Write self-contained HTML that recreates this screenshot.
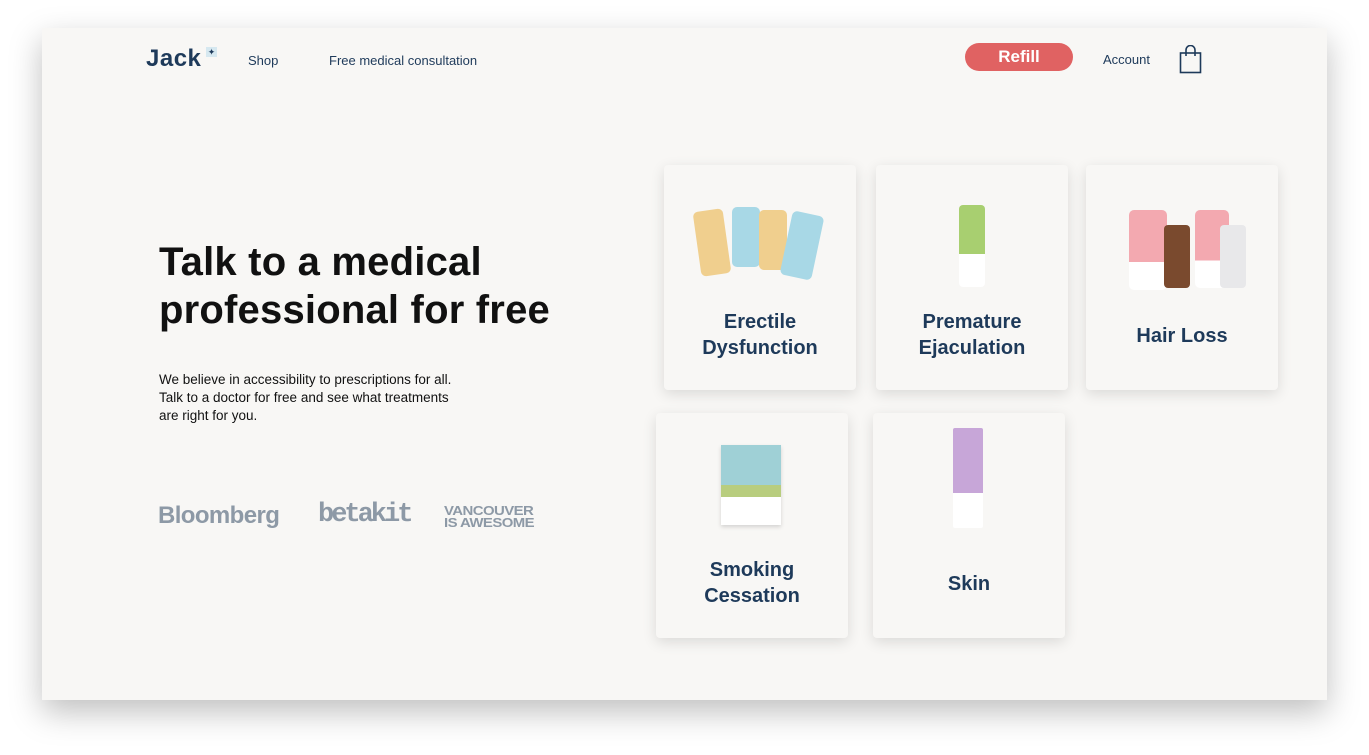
<!DOCTYPE html>
<html><head><style>
*{margin:0;padding:0;box-sizing:border-box}
body{width:1369px;height:755px;background:#fff;font-family:"Liberation Sans",sans-serif;position:relative;overflow:hidden}
.frame{position:absolute;left:42px;top:28px;width:1285px;height:672px;background:#f8f7f5;box-shadow:0 12px 30px rgba(0,0,0,.25)}
.a{position:absolute}
.nav{color:#1e3a5a;font-size:13px}
.card{position:absolute;background:#f8f7f5;border-radius:4px;box-shadow:0 4px 14px rgba(0,0,0,.12);width:192px;height:225px}
.card .t{position:absolute;left:0;right:0;text-align:center;color:#1e3a5a;font-weight:bold;font-size:20px;line-height:26px}
.logo{color:#8d99a6;font-weight:bold}
</style></head><body>
<div class="frame"></div>
<div class="a" style="left:146px;top:45px;font-size:24px;font-weight:bold;color:#1e3a5a;letter-spacing:.5px">Jack</div>
<div class="a" style="left:206px;top:47px;width:11px;height:10px;background:#d6e8f0;color:#1e3a5a;font-size:9px;text-align:center;line-height:10px">✦</div>
<div class="a nav" style="left:248px;top:53px">Shop</div>
<div class="a nav" style="left:329px;top:53px">Free medical consultation</div>
<div class="a" style="left:965px;top:43px;width:108px;height:28px;border-radius:14px;background:#e06262;color:#fff;font-weight:bold;font-size:17px;text-align:center;line-height:28px">Refill</div>
<div class="a nav" style="left:1103px;top:52px">Account</div>
<svg class="a" style="left:1179px;top:45px" width="23" height="29" viewBox="0 0 23 29"><rect x="1.5" y="8" width="20" height="19.5" fill="none" stroke="#1e3a5a" stroke-width="1.6"/><path d="M7 11V5a4.5 4.5 0 0 1 9 0v6" fill="none" stroke="#1e3a5a" stroke-width="1.6"/></svg>
<div class="a" style="left:159px;top:238px;font-size:40px;font-weight:bold;line-height:48px;color:#111;letter-spacing:.2px">Talk to a medical<br>professional for free</div>
<div class="a" style="left:159px;top:371px;font-size:13.5px;line-height:18px;color:#111">We believe in accessibility to prescriptions for all.<br>Talk to a doctor for free and see what treatments<br>are right for you.</div>
<div class="a logo" style="left:158px;top:502px;font-size:24px;letter-spacing:-.6px">Bloomberg</div>
<div class="a logo" style="left:318px;top:500px;font-size:27px;font-family:'Liberation Mono',monospace;letter-spacing:-3px">betakit</div>
<div class="a logo" style="left:444px;top:505px;font-size:13px;line-height:12px;letter-spacing:-.5px;transform:scaleX(1.15);transform-origin:left">VANCOUVER<br>IS AWESOME</div>

<div class="card" style="left:664px;top:165px">
 <div class="a" style="left:33px;top:45px;width:30px;height:65px;background:#f0cf8e;border-radius:5px;transform:rotate(-8deg)"></div>
 <div class="a" style="left:68px;top:42px;width:28px;height:60px;background:#a8d8e6;border-radius:5px"></div>
 <div class="a" style="left:95px;top:45px;width:28px;height:60px;background:#f0cf8e;border-radius:5px"></div>
 <div class="a" style="left:122px;top:48px;width:32px;height:65px;background:#a8d8e6;border-radius:5px;transform:rotate(12deg)"></div>
 <div class="t" style="top:144px">Erectile<br>Dysfunction</div></div>
<div class="card" style="left:876px;top:165px">
 <div class="a" style="left:83px;top:40px;width:26px;height:82px;background:linear-gradient(#a8cf70 60%,#fff 60%);border-radius:4px"></div>
 <div class="t" style="top:144px">Premature<br>Ejaculation</div></div>
<div class="card" style="left:1086px;top:165px">
 <div class="a" style="left:43px;top:45px;width:38px;height:80px;background:linear-gradient(#f3a9b0 65%,#fff 65%);border-radius:5px"></div>
 <div class="a" style="left:78px;top:60px;width:26px;height:63px;background:#7a4a2e;border-radius:4px"></div>
 <div class="a" style="left:109px;top:45px;width:34px;height:78px;background:linear-gradient(#f3a9b0 65%,#fff 65%);border-radius:5px"></div>
 <div class="a" style="left:134px;top:60px;width:26px;height:63px;background:#e8e8ea;border-radius:4px"></div>
 <div class="t" style="top:158px">Hair Loss</div></div>
<div class="card" style="left:656px;top:413px">
 <div class="a" style="left:65px;top:32px;width:60px;height:80px;background:linear-gradient(#9fd0d6 50%,#b8cd7e 50%,#b8cd7e 65%,#fff 65%);box-shadow:0 2px 4px rgba(0,0,0,.15)"></div>
 <div class="t" style="top:144px">Smoking<br>Cessation</div></div>
<div class="card" style="left:873px;top:413px">
 <div class="a" style="left:80px;top:15px;width:30px;height:100px;background:linear-gradient(#c7a6d8 65%,#fff 65%);border-radius:2px"></div>
 <div class="t" style="top:158px">Skin</div></div>
</body></html>
